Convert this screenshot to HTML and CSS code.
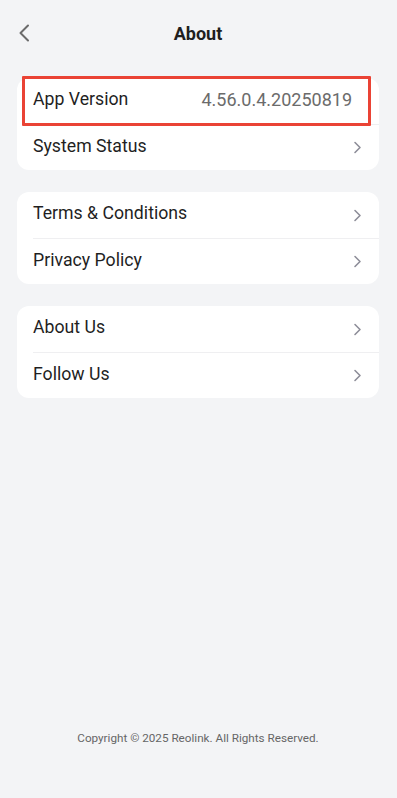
FILE: index.html
```html
<!DOCTYPE html>
<html>
<head>
<meta charset="utf-8">
<link rel="stylesheet" href="styles.css">
</head>
<body>
<div class="page">
  <header class="topbar">
    <span class="back">
      <svg width="12" height="18" viewBox="0 0 12 18"><path d="M10 1.5 L2.5 9 L10 16.5" fill="none" stroke="#6b6b6b" stroke-width="2" stroke-linecap="round" stroke-linejoin="round"/></svg>
    </span>
    <h1 class="title">About</h1>
  </header>

  <section class="card">
    <div class="row highlighted">
      <span class="label">App Version</span>
      <span class="value">4.56.0.4.20250819</span>
    </div>
    <div class="row">
      <span class="label">System Status</span>
      <span class="chev"><svg width="9" height="13" viewBox="0 0 9 13"><path d="M2 1.5 L7 6.5 L2 11.5" fill="none" stroke="#8e8e99" stroke-width="1.6" stroke-linecap="round" stroke-linejoin="round"/></svg></span>
    </div>
  </section>

  <section class="card">
    <div class="row">
      <span class="label">Terms &amp; Conditions</span>
      <span class="chev"><svg width="9" height="13" viewBox="0 0 9 13"><path d="M2 1.5 L7 6.5 L2 11.5" fill="none" stroke="#8e8e99" stroke-width="1.6" stroke-linecap="round" stroke-linejoin="round"/></svg></span>
    </div>
    <div class="row">
      <span class="label">Privacy Policy</span>
      <span class="chev"><svg width="9" height="13" viewBox="0 0 9 13"><path d="M2 1.5 L7 6.5 L2 11.5" fill="none" stroke="#8e8e99" stroke-width="1.6" stroke-linecap="round" stroke-linejoin="round"/></svg></span>
    </div>
  </section>

  <section class="card">
    <div class="row">
      <span class="label">About Us</span>
      <span class="chev"><svg width="9" height="13" viewBox="0 0 9 13"><path d="M2 1.5 L7 6.5 L2 11.5" fill="none" stroke="#8e8e99" stroke-width="1.6" stroke-linecap="round" stroke-linejoin="round"/></svg></span>
    </div>
    <div class="row">
      <span class="label">Follow Us</span>
      <span class="chev"><svg width="9" height="13" viewBox="0 0 9 13"><path d="M2 1.5 L7 6.5 L2 11.5" fill="none" stroke="#8e8e99" stroke-width="1.6" stroke-linecap="round" stroke-linejoin="round"/></svg></span>
    </div>
  </section>

  <div class="spacer"></div>
  <footer class="copyright">Copyright © 2025 Reolink. All Rights Reserved.</footer>
</div>
</body>
</html>
```

FILE: styles.css
```css
html, body {
  margin: 0;
  padding: 0;
  height: 100%;
  background: #f3f4f6;
}
body {
  font-family: Roboto, "Noto Sans", "Liberation Sans", sans-serif;
  color: #1f1f1f;
}
.page {
  display: flex;
  flex-direction: column;
  min-height: 798px;
  box-sizing: border-box;
  padding: 0 18px 0 17px;
}
.topbar {
  position: relative;
  height: 66px;
  display: flex;
  align-items: center;
  justify-content: center;
  margin-bottom: 12px;
}
.back {
  position: absolute;
  left: 1px;
  top: 24px;
  display: flex;
}
.title {
  margin: 0;
  font-size: 18px;
  font-weight: 700;
  color: #1f1f1f;
  position: relative;
  top: 0px;
}
.card {
  background: #ffffff;
  border-radius: 12px;
  margin-bottom: 22px;
}
.row {
  position: relative;
  height: 46px;
  display: flex;
  align-items: center;
  justify-content: space-between;
  padding: 0 17px 0 16px;
  font-size: 17.7px;
}
.row + .row::before {
  content: "";
  position: absolute;
  left: 16px;
  right: 0;
  top: -1px;
  height: 1px;
  background: #efeff1;
}
.row + .row {
  margin-top: 1px;
  height: 45px;
}
.highlighted::after {
  content: "";
  position: absolute;
  z-index: 2;
  left: 5px;
  right: 8px;
  top: -2px;
  bottom: -2px;
  border: 3px solid #ea4335;
  border-radius: 1px;
  box-sizing: border-box;
}
.label {
  color: #1f1f1f;
  position: relative;
  top: -2px;
}
.value {
  color: #6b6b6b;
  font-size: 18px;
  padding-right: 10px;
  position: relative;
  top: -2px;
}
.chev {
  display: flex;
}
.spacer {
  flex: 1;
}
.copyright {
  text-align: center;
  font-size: 11.7px;
  color: #666666;
  padding-bottom: 53px;
}
```
